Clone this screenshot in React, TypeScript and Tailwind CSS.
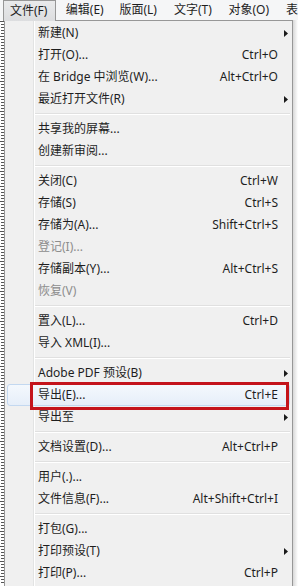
import React from 'react';

type Item =
  | { sep: true }
  | { sep?: false; label: string; shortcut?: string; sub?: boolean; disabled?: boolean; active?: boolean };

const items: Item[] = [
  { label: '新建(N)', sub: true },
  { label: '打开(O)...', shortcut: 'Ctrl+O' },
  { label: '在 Bridge 中浏览(W)...', shortcut: 'Alt+Ctrl+O' },
  { label: '最近打开文件(R)', sub: true },
  { sep: true },
  { label: '共享我的屏幕...' },
  { label: '创建新审阅...' },
  { sep: true },
  { label: '关闭(C)', shortcut: 'Ctrl+W' },
  { label: '存储(S)', shortcut: 'Ctrl+S' },
  { label: '存储为(A)...', shortcut: 'Shift+Ctrl+S' },
  { label: '登记(I)...', disabled: true },
  { label: '存储副本(Y)...', shortcut: 'Alt+Ctrl+S' },
  { label: '恢复(V)', disabled: true },
  { sep: true },
  { label: '置入(L)...', shortcut: 'Ctrl+D' },
  { label: '导入 XML(I)...' },
  { sep: true },
  { label: 'Adobe PDF 预设(B)', sub: true },
  { label: '导出(E)...', shortcut: 'Ctrl+E', active: true },
  { label: '导出至', sub: true },
  { sep: true },
  { label: '文档设置(D)...', shortcut: 'Alt+Ctrl+P' },
  { sep: true },
  { label: '用户(.)...' },
  { label: '文件信息(F)...', shortcut: 'Alt+Shift+Ctrl+I' },
  { sep: true },
  { label: '打包(G)...' },
  { label: '打印预设(T)', sub: true },
  { label: '打印(P)...', shortcut: 'Ctrl+P' },
];

const Arrow = () => (
  <svg width="4" height="7" viewBox="0 0 4 7" className="absolute left-[279px] top-[8px]">
    <path d="M0 0 L4 3.5 L0 7 Z" fill="#1a1a1a" />
  </svg>
);

const Ruler = () => (
  <svg width="4" height="566" className="block">
    <rect width="4" height="566" fill="#ffffff" />
    {Array.from({ length: 188 }).map((_, i) => (
      <line key={i} x1={i % 5 === 0 ? 0 : 1} x2="4" y1={i * 3 + 1.5} y2={i * 3 + 1.5} stroke="#555" strokeWidth="1" />
    ))}
  </svg>
);

const App: React.FC = () => {
  return (
    <div className="relative w-[298px] h-[586px] overflow-hidden bg-white font-['Noto_Sans','Noto_Sans_CJK_SC',sans-serif] text-[12px] text-[#1e1e1e]">
      {/* Menu bar */}
      <div className="flex h-[20px] items-center bg-[#f5f6f7] pl-[3px] whitespace-nowrap">
        <div className="relative z-10 h-[21px] w-[54px] self-start border border-b-0 border-[#979797] bg-gradient-to-b from-[#e9eaeb] to-[#dcdddf] pl-[6px] leading-[20px]">
          文件(F)
        </div>
        <span className="ml-[10px] w-[55px]">编辑(E)</span>
        <span className="w-[56px]">版面(L)</span>
        <span className="w-[56px]">文字(T)</span>
        <span className="w-[59px]">对象(O)</span>
        <span>表</span>
      </div>

      <div className="flex">
        {/* ruler */}
        <div className="w-[4px] shrink-0">
          <Ruler />
        </div>

        {/* dropdown */}
        <div className="relative w-[289px] shrink-0 border border-[#979797] bg-[#f0f0f0] pt-[1px] pb-[4px]">
          {/* gutter line */}
          <div className="absolute left-[28px] top-0 bottom-0 w-[2px] border-l border-[#e2e3e3] bg-white" />

          {items.map((it, i) =>
            it.sep ? (
              <div key={i} className="flex h-[8px] items-center pl-[30px] pr-[2px]">
                <div className="h-[2px] w-full border-t border-[#e0e0e0] bg-white" />
              </div>
            ) : (
              <div key={i} className="relative h-[22px] whitespace-nowrap">
                {it.active && (
                  <div className="absolute left-[2px] right-[2px] top-[0px] bottom-[0px] rounded-[3px] border border-[#c3d8f0] bg-gradient-to-b from-[#f4f8fd] to-[#e6eef9]" />
                )}
                <div className={`relative flex h-[22px] items-center pl-[33px] pr-[14px] ${it.disabled ? 'text-[#8d8d8d]' : ''}`}>
                  <span className="flex-1">{it.label}</span>
                  {it.shortcut && <span>{it.shortcut}</span>}
                </div>
                {it.sub && <Arrow />}
              </div>
            )
          )}

          {/* red highlight frame */}
          <div className="absolute left-[25px] top-[361px] h-[28px] w-[259px] border-[3px] border-[#c4141c]" />
        </div>

        {/* shadow */}
        <div className="w-[5px] shrink-0 bg-gradient-to-r from-[#d8d8d8] to-white" />
      </div>
    </div>
  );
};

export default App;
